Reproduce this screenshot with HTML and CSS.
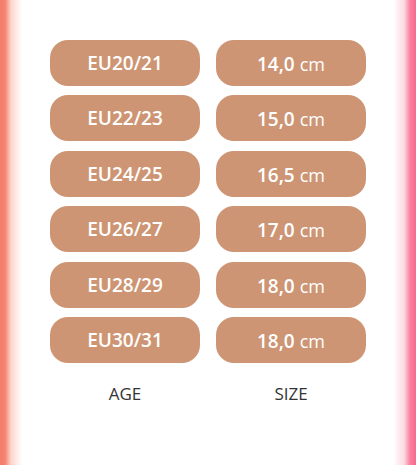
FILE: index.html
```html
<!DOCTYPE html>
<html>

<head>
    <meta name="viewport" content="width=device-width, initial-scale=1.0">
    <title>Size chart</title>
    <link rel="stylesheet" href="styles.css">
</head>

<body>
    <div class="chart">
        <div class="pill">EU20/21</div>
        <div class="pill size">14,0 <span class="unit">cm</span></div>
        <div class="pill">EU22/23</div>
        <div class="pill size">15,0 <span class="unit">cm</span></div>
        <div class="pill">EU24/25</div>
        <div class="pill size">16,5 <span class="unit">cm</span></div>
        <div class="pill">EU26/27</div>
        <div class="pill size">17,0 <span class="unit">cm</span></div>
        <div class="pill">EU28/29</div>
        <div class="pill size">18,0 <span class="unit">cm</span></div>
        <div class="pill">EU30/31</div>
        <div class="pill size">18,0 <span class="unit">cm</span></div>

        <div class="label">AGE</div>
        <div class="label">SIZE</div>
    </div>
</body>

</html>
```

FILE: styles.css
```css
html,
body {
    height: 100%;
}

body {
    margin: 0;
    font-family: "Open Sans", "Noto Sans", sans-serif;
    background: linear-gradient(to right,
            #f47e6a 0px,
            #f5836f 5px,
            #fcd5cd 11px,
            #ffffff 22px,
            #ffffff 393px,
            #fdd8e2 404px,
            #f8819f 410px,
            #f56a8e 416px);
    overflow: hidden;
}

/* two columns of pills */
.chart {
    display: grid;
    grid-template-columns: 150px 150px;
    grid-auto-rows: 46px;
    column-gap: 16px;
    row-gap: 9.4px;
    padding: 40px 0 0 50px;
}

.pill {
    display: flex;
    align-items: center;
    justify-content: center;
    background: #cd9573;
    border-radius: 18px;
    color: #ffffff;
    font-size: 19px;
    font-weight: 600;
}

.pill.size {
    padding-top: 2px;
    gap: 5px;
}

.unit {
    font-weight: 400;
    font-size: 18px;
}

.label {
    margin-top: 11px;
    text-align: center;
    color: #333333;
    font-size: 17px;
    line-height: 22px;
}
```
